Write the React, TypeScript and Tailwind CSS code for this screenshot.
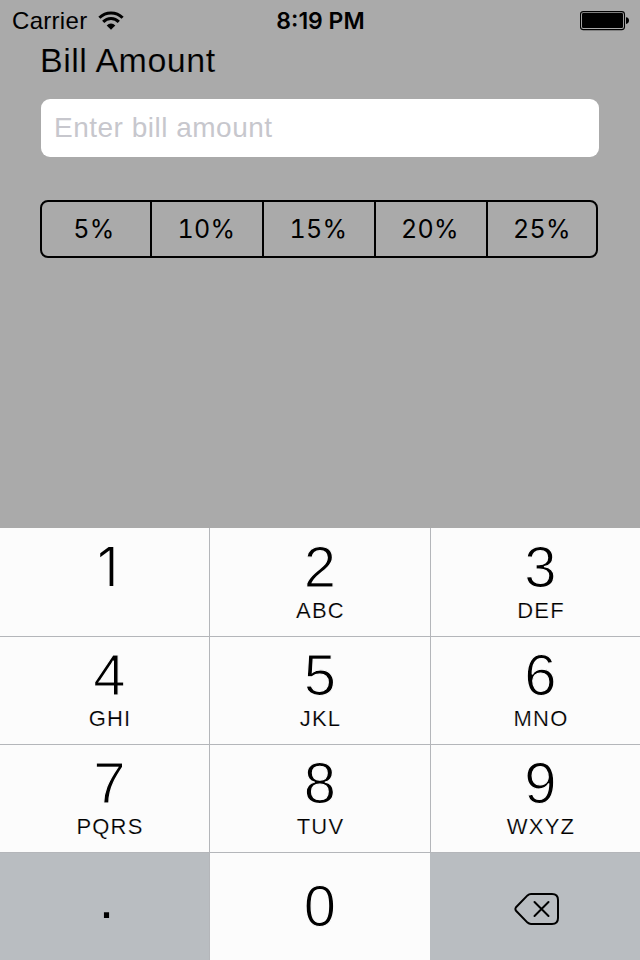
import React from "react";

const TIPS = [
  { label: "5%", cell: "w-[110px] border-r-2 pr-[4px]" },
  { label: "10%", cell: "w-[112px] border-r-2 pr-[1px]" },
  { label: "15%", cell: "w-[112px] border-r-2 pr-[1px]" },
  { label: "20%", cell: "w-[112px] border-r-2 pr-[2px]" },
  { label: "25%", cell: "w-[108px]" },
];

const KEYS = [
  ["1", ""],
  ["2", "ABC"],
  ["3", "DEF"],
  ["4", "GHI"],
  ["5", "JKL"],
  ["6", "MNO"],
  ["7", "PQRS"],
  ["8", "TUV"],
  ["9", "WXYZ"],
];

const HELV = "font-['Liberation_Sans',Arial,sans-serif]";
const ONE = "font-[Inter,sans-serif] font-light text-[54px] pr-[3px]";
const DIGIT = "font-['Liberation_Sans',Arial,sans-serif] text-[58px] [-webkit-text-stroke:1.2px_#fcfcfc]";

function StatusBar() {
  return (
    <header className="grid h-10 grid-cols-[1fr_auto_1fr] items-center pl-3 pr-[11px] pt-px">
      <div className="flex items-center gap-[11px]">
        <span className={`${HELV} text-[24px] leading-10 tracking-[0.3px]`}>Carrier</span>
        <svg className="-mt-px" width="26" height="20" viewBox="0 0 26 20" fill="none" stroke="#000">
          <path d="M1.4 6.7A16.4 16.4 0 0 1 24.6 6.7" strokeWidth="3" />
          <path d="M5.2 10.9A10.7 10.7 0 0 1 20.8 10.9" strokeWidth="3" />
          <path d="M8.7 14.4A6 6 0 0 1 17.3 14.4L13 18.8Z" fill="#000" stroke="none" />
        </svg>
      </div>
      <span className="font-[Inter,sans-serif] text-[23px] font-semibold leading-10">8:19 PM</span>
      <svg className="justify-self-end" width="49" height="20" viewBox="0 0 49 20">
        <rect x="0.5" y="0.6" width="44" height="18" rx="2.8" fill="none" stroke="#000" strokeWidth="1.1" />
        <rect x="2" y="2.1" width="41" height="15" rx="1.3" />
        <path d="M46 6.2Q49 6.6 49 9.6T46 13Z" />
      </svg>
    </header>
  );
}

function DeleteIcon() {
  return (
    <svg width="46" height="34" viewBox="0 0 46 34" fill="none" stroke="#000" strokeWidth="2" strokeLinejoin="round" strokeLinecap="round">
      <path d="M17 2H38Q44 2 44 8V26Q44 32 38 32H17Q15 32 13.5 30.6L2 18.8Q.8 17 2 15.2L13.5 3.4Q15 2 17 2Z" />
      <path d="M20.5 10L34.5 24M34.5 10L20.5 24" />
    </svg>
  );
}

export default function App() {
  return (
    <div className="flex h-[960px] w-[640px] flex-col overflow-hidden bg-[#aaaaaa] text-black">
      <StatusBar />
      <main className="flex h-[488px] flex-col pl-10">
        <h1 className={`${HELV} h-[59px] text-[34px] leading-[40px] tracking-[0.5px] [-webkit-text-stroke:0.2px_#aaaaaa]`}>Bill Amount</h1>
        <input
          className={`${HELV} ml-px h-[58px] w-[558px] rounded-[9px] bg-white px-[13px] text-[28px] tracking-[0.5px] outline-none placeholder:text-[#c7c7cd] placeholder:opacity-100`}
          placeholder="Enter bill amount"
        />
        <div className="mt-[43px] flex h-[58px] w-[558px] rounded-[8px] border-2 border-black">
          {TIPS.map((t) => (
            <button key={t.label} className={`${t.cell} flex items-center justify-center border-black pt-px font-[Inter,sans-serif] text-[25px] font-normal tabular-nums tracking-[0.3px]`}>
              {t.label}
            </button>
          ))}
        </div>
      </main>
      <section className="grid h-[432px] grid-cols-[210px_220px_210px] grid-rows-[109px_108px_108px_107px] bg-[#fcfcfc]">
        {KEYS.map(([n, letters], i) => (
          <button key={n} className={`flex flex-col items-center border-b border-[#b4b6ba] ${i < 3 ? "pt-[11px]" : "pt-[10px]"} ${i % 3 === 0 ? "border-r pl-[10px]" : i % 3 === 2 ? "border-l pl-[10px]" : ""}`}>
            <span className={`${n === "1" ? ONE : DIGIT} h-[57px] leading-[56px]`}>{n}</span>
            <span className={`${HELV} pl-px text-[22px] leading-[30px] tracking-[1.2px] [-webkit-text-stroke:0.2px_#fcfcfc]`}>{letters}</span>
          </button>
        ))}
        <button className="flex justify-center border-r border-[#b4b6ba] bg-[#b9bdc1] pl-[4px] pt-[18px]">
          <span className={`${HELV} text-[54px] leading-[56px]`}>.</span>
        </button>
        <button className="flex justify-center bg-[#fcfcfc] pt-[25px]">
          <span className={`${DIGIT} leading-[56px]`}>0</span>
        </button>
        <button className="flex items-center justify-center bg-[#b9bdc1] pl-[3px] pt-[5px]">
          <DeleteIcon />
        </button>
      </section>
    </div>
  );
}
